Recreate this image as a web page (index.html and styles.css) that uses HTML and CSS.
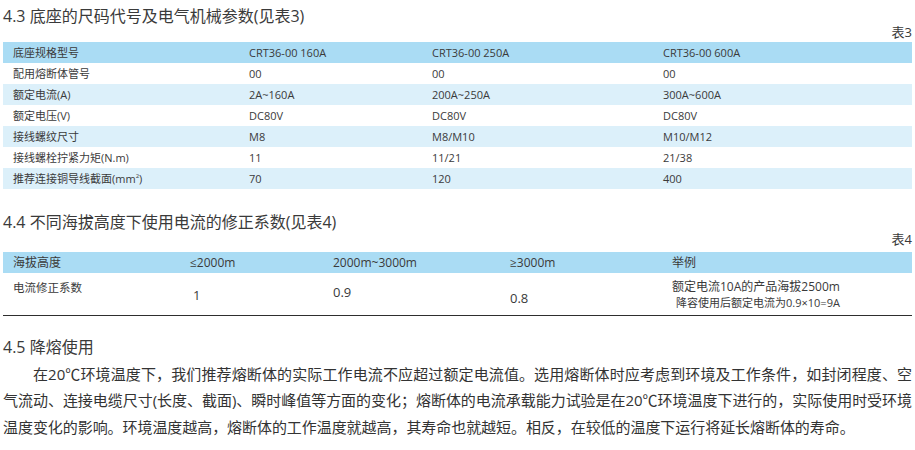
FILE: index.html
```html
<!DOCTYPE html>
<html lang="zh-CN">
<head>
<meta charset="utf-8">
<link rel="stylesheet" href="styles.css">
</head>
<body>
<div class="page">
  <h2 class="sec-title first">4.3 底座的尺码代号及电气机械参数(见表3)</h2>
  <div class="caption">表3</div>
  <table class="spec">
    <colgroup><col class="c1"><col class="c2"><col class="c3"><col class="c4"></colgroup>
    <tr class="head"><td>底座规格型号</td><td>CRT36-00 160A</td><td>CRT36-00 250A</td><td>CRT36-00 600A</td></tr>
    <tr><td>配用熔断体管号</td><td>00</td><td>00</td><td>00</td></tr>
    <tr class="alt"><td>额定电流(A)</td><td>2A~160A</td><td>200A~250A</td><td>300A~600A</td></tr>
    <tr><td>额定电压(V)</td><td>DC80V</td><td>DC80V</td><td>DC80V</td></tr>
    <tr class="alt"><td>接线螺纹尺寸</td><td>M8</td><td>M8/M10</td><td>M10/M12</td></tr>
    <tr><td>接线螺栓拧紧力矩(N.m)</td><td>11</td><td>11/21</td><td>21/38</td></tr>
    <tr class="alt"><td>推荐连接铜导线截面(mm<sup>2</sup>)</td><td>70</td><td>120</td><td>400</td></tr>
  </table>

  <h2 class="sec-title second">4.4 不同海拔高度下使用电流的修正系数(见表4)</h2>
  <div class="caption">表4</div>
  <table class="alt-table">
    <colgroup><col class="d1"><col class="d2"><col class="d3"><col class="d4"><col class="d5"></colgroup>
    <tr class="head"><td>海拔高度</td><td>≤2000m</td><td>2000m~3000m</td><td>≥3000m</td><td>举例</td></tr>
    <tr class="body-row">
      <td class="label">电流修正系数</td>
      <td class="v1">1</td>
      <td class="v2">0.9</td>
      <td class="v3">0.8</td>
      <td class="example">额定电流10A的产品海拔2500m<br><span class="note">降容使用后额定电流为0.9×10=9A</span></td>
    </tr>
  </table>

  <h2 class="sec-title third">4.5 降熔使用</h2>
  <p class="para">在20℃环境温度下，我们推荐熔断体的实际工作电流不应超过额定电流值。选用熔断体时应考虑到环境及工作条件，如封闭程度、空气流动、连接电缆尺寸(长度、截面)、瞬时峰值等方面的变化；熔断体的电流承载能力试验是在20℃环境温度下进行的，实际使用时受环境温度变化的影响。环境温度越高，熔断体的工作温度就越高，其寿命也就越短。相反，在较低的温度下运行将延长熔断体的寿命。</p>
</div>
</body>
</html>
```

FILE: styles.css
```css
* { box-sizing: border-box; }
html, body { margin: 0; padding: 0; background: #ffffff; }
body {
  font-family: "Open Sans", "Noto Sans CJK SC", sans-serif;
  color: #3a3a3a;
}
.page {
  width: 915px;
  padding: 0 3px 0 3px;
}
.sec-title {
  margin: 0;
  font-weight: normal;
  font-size: 16px;
  line-height: 20px;
  color: #3a3a3a;
}
.sec-title.first { padding-top: 6px; }
.sec-title.second { margin-top: 23px; }
.sec-title.third { margin-top: 21px; }
.caption {
  text-align: right;
  font-size: 13px;
  line-height: 12px;
  margin-bottom: 4px;
  padding-right: 0;
}
.sec-title.second + .caption { margin-top: 1px; margin-bottom: 7px; }

table {
  width: 909px;
  border-collapse: collapse;
  table-layout: fixed;
}
td {
  padding: 0 0 0 10px;
  white-space: nowrap;
}
.head td { background: #aadcf4; }

.spec { font-size: 11px; }
.spec td { height: 21px; line-height: 21px; }
.spec .alt td { background: #dcf0fa; }
.spec sup { font-size: 6px; line-height: 0; vertical-align: 5px; }
.c1 { width: 236px; }
.c2 { width: 183px; }
.c3 { width: 231px; }
.c4 { width: 259px; }

.alt-table { font-size: 12px; border-bottom: 1.5px solid #2e2e2e; }
.alt-table .head td { height: 21px; line-height: 21px; }
.d1 { width: 177px; }
.d2 { width: 143px; }
.d3 { width: 177px; }
.d4 { width: 162px; }
.d5 { width: 250px; }
.body-row td {
  height: 42px;
  vertical-align: top;
  line-height: 16px;
}
.body-row .label { padding-top: 7px; font-size: 11.5px; }
.body-row .v1 { padding-top: 14px; padding-left: 13px; font-size: 13px; }
.body-row .v2 { padding-top: 11px; font-size: 13px; }
.body-row .v3 { padding-top: 17px; padding-left: 10px; font-size: 13px; }
.body-row .example { padding-top: 6px; }
.note { display: inline-block; padding-left: 4px; font-size: 11px; }

.para {
  margin: 4px 0 0 0;
  font-size: 15px;
  line-height: 26.5px;
  text-indent: 30px;
  text-align: justify;
  letter-spacing: -0.06px;
  color: #333333;
}
```
